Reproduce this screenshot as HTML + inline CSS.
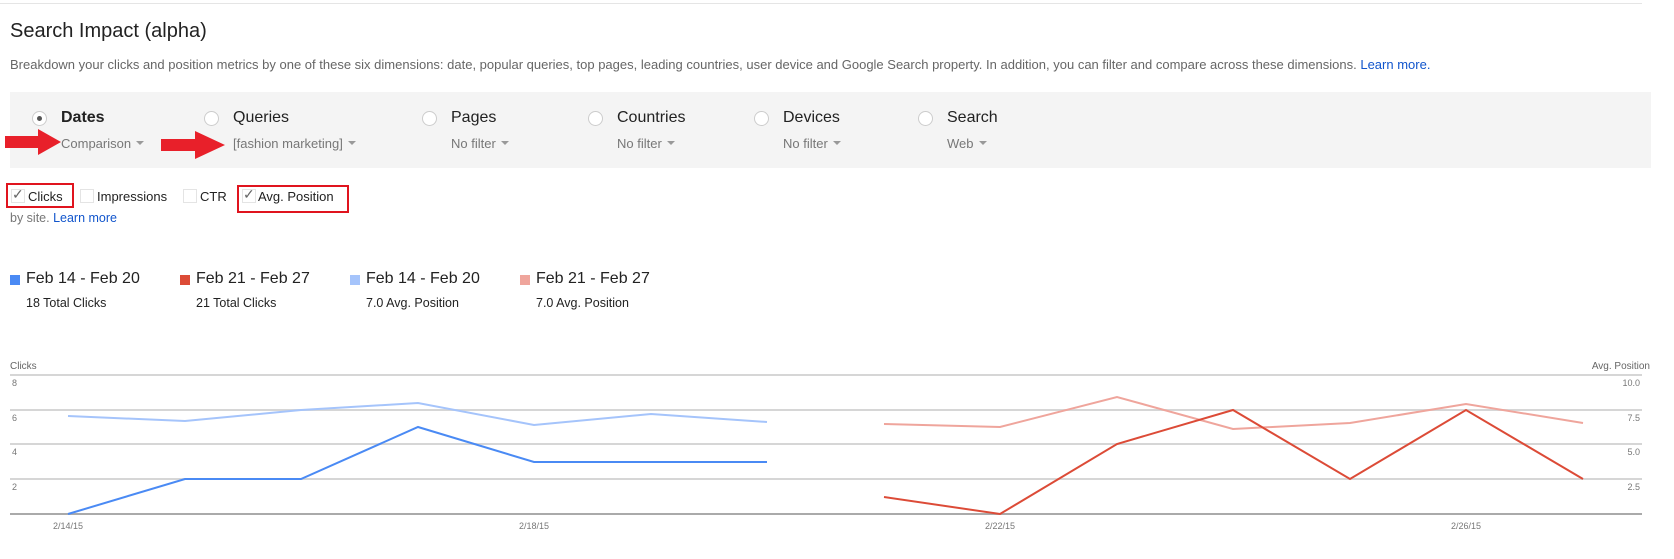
<!DOCTYPE html>
<html><head><meta charset="utf-8"><style>
body{margin:0;width:1674px;height:559px;overflow:hidden;background:#fff;font-family:"Liberation Sans",Arial,sans-serif;position:relative;color:#222}
.a{position:absolute;white-space:nowrap}
.lab{font-size:16px;color:#222}
.sub{font-size:13px;color:#777}
.sub:after{content:"";display:inline-block;border:4px solid transparent;border-top:4px solid #999;margin-left:5px;vertical-align:-1px}
.rad{position:absolute;width:13px;height:13px;border:1px solid #ccc;border-radius:50%;background:#fff}
.cb{position:absolute;width:12px;height:12px;border:1px solid #e4e4e4;background:#fff}
.ck{font-size:13px;color:#222}
.lg{font-size:16px;color:#222}
.ls{font-size:12.5px;color:#222}
.sq{position:absolute;width:10px;height:10px}
</style></head><body>
<div class="a" style="left:0;top:3px;width:1642px;height:1px;background:#e5e5e5"></div>
<div class="a" style="left:10px;top:20px;font-size:20px;color:#222">Search Impact (alpha)</div>
<div class="a" style="left:10px;top:57px;font-size:13px;color:#666">Breakdown your clicks and position metrics by one of these six dimensions: date, popular queries, top pages, leading countries, user device and Google Search property. In addition, you can filter and compare across these dimensions. <span style="color:#15c">Learn more.</span></div>
<div class="a" style="left:10px;top:92px;width:1641px;height:76px;background:#f4f4f4"></div>

<div class="rad" style="left:32px;top:111px"></div><div class="a" style="left:37px;top:116px;width:5px;height:5px;border-radius:50%;background:#555"></div>
<div class="a lab" style="left:61px;top:109px;font-weight:bold">Dates</div>
<div class="a sub" style="left:61px;top:136px">Comparison</div>
<div class="rad" style="left:204px;top:111px"></div>
<div class="a lab" style="left:233px;top:109px">Queries</div>
<div class="a sub" style="left:233px;top:136px">[fashion marketing]</div>
<div class="rad" style="left:422px;top:111px"></div>
<div class="a lab" style="left:451px;top:109px">Pages</div>
<div class="a sub" style="left:451px;top:136px">No filter</div>
<div class="rad" style="left:588px;top:111px"></div>
<div class="a lab" style="left:617px;top:109px">Countries</div>
<div class="a sub" style="left:617px;top:136px">No filter</div>
<div class="rad" style="left:754px;top:111px"></div>
<div class="a lab" style="left:783px;top:109px">Devices</div>
<div class="a sub" style="left:783px;top:136px">No filter</div>
<div class="rad" style="left:918px;top:111px"></div>
<div class="a lab" style="left:947px;top:109px">Search</div>
<div class="a sub" style="left:947px;top:136px">Web</div>

<svg class="a" style="left:0;top:0" width="260" height="170"><polygon points="5,136 38,136 38,129 61,142 38,155 38,148 5,148" fill="#e8202a"/><polygon points="161,139 195,139 195,131 225,145 195,159 195,151 161,151" fill="#e8202a"/></svg>

<div class="a" style="left:6px;top:183px;width:64px;height:21px;border:2px solid #e0141e"></div>
<div class="cb" style="left:11px;top:189px"></div><div class="a" style="left:12px;top:186px;font-size:14px;color:#666">✓</div>
<div class="a ck" style="left:28px;top:189px">Clicks</div>
<div class="cb" style="left:80px;top:189px"></div>
<div class="a ck" style="left:97px;top:189px">Impressions</div>
<div class="cb" style="left:183px;top:189px"></div>
<div class="a ck" style="left:200px;top:189px">CTR</div>
<div class="a" style="left:237px;top:185px;width:108px;height:24px;border:2px solid #e0141e"></div>
<div class="cb" style="left:242px;top:189px"></div><div class="a" style="left:243px;top:186px;font-size:14px;color:#666">✓</div>
<div class="a ck" style="left:258px;top:189px">Avg. Position</div>
<div class="a" style="left:10px;top:211px;font-size:12.5px;color:#777">by site. <span style="color:#15c">Learn more</span></div>

<div class="sq" style="left:10px;top:275px;background:#4a8af4"></div><div class="a lg" style="left:26px;top:270px">Feb 14 - Feb 20</div><div class="a ls" style="left:26px;top:296px">18 Total Clicks</div>
<div class="sq" style="left:180px;top:275px;background:#dc4b37"></div><div class="a lg" style="left:196px;top:270px">Feb 21 - Feb 27</div><div class="a ls" style="left:196px;top:296px">21 Total Clicks</div>
<div class="sq" style="left:350px;top:275px;background:#a5c4fb"></div><div class="a lg" style="left:366px;top:270px">Feb 14 - Feb 20</div><div class="a ls" style="left:366px;top:296px">7.0 Avg. Position</div>
<div class="sq" style="left:520px;top:275px;background:#efa59c"></div><div class="a lg" style="left:536px;top:270px">Feb 21 - Feb 27</div><div class="a ls" style="left:536px;top:296px">7.0 Avg. Position</div>

<svg class="a" style="left:0;top:0" width="1674" height="559" font-family="Liberation Sans, Arial, sans-serif">
<text x="10" y="369" font-size="10" fill="#666">Clicks</text>
<text x="1650" y="369" font-size="10" fill="#666" text-anchor="end">Avg. Position</text>
<g stroke="#d6d6d6" stroke-width="2"><line x1="10" x2="1642" y1="375" y2="375"/><line x1="10" x2="1642" y1="410" y2="410"/><line x1="10" x2="1642" y1="444" y2="444"/><line x1="10" x2="1642" y1="479" y2="479"/></g>
<line x1="10" x2="1642" y1="514" y2="514" stroke="#aaa" stroke-width="2"/>
<g font-size="9" fill="#777"><text x="12" y="386">8</text><text x="12" y="421">6</text><text x="12" y="455">4</text><text x="12" y="490">2</text></g>
<g font-size="9" fill="#777" text-anchor="end"><text x="1640" y="386">10.0</text><text x="1640" y="421">7.5</text><text x="1640" y="455">5.0</text><text x="1640" y="490">2.5</text></g>
<g font-size="9" fill="#777" text-anchor="middle"><text x="68" y="529">2/14/15</text><text x="534" y="529">2/18/15</text><text x="1000" y="529">2/22/15</text><text x="1466" y="529">2/26/15</text></g>
<polyline fill="none" stroke="#a5c4fb" stroke-width="2" points="68,416 185,421 301,410 418,403 534,425 651,414 767,422"/>
<polyline fill="none" stroke="#4a8af4" stroke-width="2" points="68,514 185,479 301,479 418,427 534,462 651,462 767,462"/>
<polyline fill="none" stroke="#efa59c" stroke-width="2" points="884,424 1000,427 1117,397 1233,429 1350,423 1466,404 1583,423"/>
<polyline fill="none" stroke="#dc4b37" stroke-width="2" points="884,497 1000,514 1117,444 1233,410 1350,479 1466,410 1583,479"/>
</svg>
</body></html>
